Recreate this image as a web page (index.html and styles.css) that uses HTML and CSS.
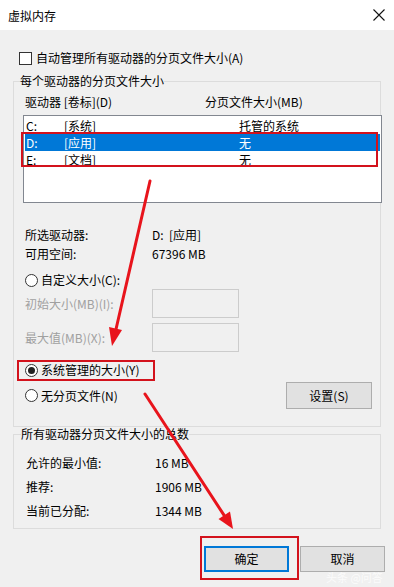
FILE: index.html
```html
<!DOCTYPE html>
<html lang="zh-CN">
<head>
<meta charset="utf-8">
<title>虚拟内存</title>
<link rel="stylesheet" href="styles.css">
</head>
<body>
<div class="window">
  <div class="titlebar">
    <span class="title">虚拟内存</span>
    <svg class="close" width="12" height="12" viewBox="0 0 12 12"><path d="M0.5 0.5 L11.5 11.5 M11.5 0.5 L0.5 11.5" stroke="#111" stroke-width="1.1" fill="none"/></svg>
  </div>
  <div class="content">
    <div class="check-row"><span class="checkbox"></span><span>自动管理所有驱动器的分页文件大小(A)</span></div>

    <fieldset class="group group-drives">
      <legend>每个驱动器的分页文件大小</legend>
      <div class="list-header"><span class="col-drive">驱动器 [卷标](D)</span><span>分页文件大小(MB)</span></div>
      <div class="listbox">
        <div class="lrow"><span class="c1">C:</span><span class="c2">[系统]</span><span>托管的系统</span></div>
        <div class="lrow selected"><span class="c1">D:</span><span class="c2">[应用]</span><span>无</span></div>
        <div class="lrow"><span class="c1">E:</span><span class="c2">[文档]</span><span>无</span></div>
      </div>
      <div class="info-row first"><span class="lbl">所选驱动器:</span><span>D:&nbsp;&nbsp;[应用]</span></div>
      <div class="info-row"><span class="lbl">可用空间:</span><span>67396 MB</span></div>
      <div class="radio-row custom"><span class="radio"></span><span>自定义大小(C):</span></div>
      <div class="input-row"><span class="lbl disabled">初始大小(MB)(I):</span><span class="textbox"></span></div>
      <div class="input-row second"><span class="lbl disabled">最大值(MB)(X):</span><span class="textbox"></span></div>
      <div class="radio-row system"><span class="radio checked"></span><span>系统管理的大小(Y)</span></div>
      <div class="radio-row nofile">
        <span class="radio-wrap"><span class="radio"></span><span>无分页文件(N)</span></span>
        <span class="btn set-btn">设置(S)</span>
      </div>
    </fieldset>

    <fieldset class="group group-total">
      <legend>所有驱动器分页文件大小的总数</legend>
      <div class="total-row"><span class="lbl2">允许的最小值:</span><span>16 MB</span></div>
      <div class="total-row"><span class="lbl2">推荐:</span><span>1906 MB</span></div>
      <div class="total-row"><span class="lbl2">当前已分配:</span><span>1344 MB</span></div>
    </fieldset>

    <div class="buttons">
      <span class="btn ok-btn">确定</span>
      <span class="btn">取消</span>
    </div>
  </div>

  <div class="mark mark-list"></div>
  <div class="mark mark-radio"></div>
  <div class="mark mark-ok"></div>

  <svg class="arrows" width="394" height="587" viewBox="0 0 394 587">
    <g stroke="#e8141c" stroke-width="3" stroke-linecap="round" fill="none">
      <line x1="150" y1="181" x2="115.6" y2="331"/>
      <line x1="145" y1="394" x2="224.3" y2="515.6"/>
    </g>
    <g fill="#e8141c">
      <polygon points="112,346 122,330 109,327"/>
      <polygon points="233,529 230,511.5 218.5,519"/>
    </g>
  </svg>

  <div class="watermark">头条 @问答</div>
</div>
</body>
</html>
```

FILE: styles.css
```css
* { box-sizing: border-box; }

html, body {
  margin: 0;
  padding: 0;
}

body {
  width: 394px;
  height: 587px;
  overflow: hidden;
  background: #f0f0f0;
  font-family: "Noto Sans CJK SC", "Noto Sans", sans-serif;
  font-size: 12px;
  color: #000;
}

.window {
  position: relative;
  width: 394px;
  height: 587px;
}

.titlebar {
  height: 30px;
  background: #fff;
  display: flex;
  align-items: center;
  justify-content: space-between;
  padding: 0 9px 0 8px;
}

.title {
  font-size: 12px;
  line-height: 16px;
  margin-top: 1px;
}

.close {
  display: block;
}

.content {
  padding: 0 13px;
}

.check-row {
  display: flex;
  align-items: center;
  height: 16px;
  line-height: 16px;
  margin-top: 20px;
  padding-left: 6px;
}

.checkbox {
  width: 13px;
  height: 13px;
  border: 1px solid #333;
  background: #fff;
  margin-right: 4px;
  flex: none;
}

.group {
  margin: 0;
  min-width: 0;
  border: 1px solid #dcdcdc;
}

.group legend {
  padding: 0;
  margin-left: -3px;
  line-height: 16px;
  height: 16px;
}

.group-drives {
  margin-top: 7px;
  padding: 0 8px 17px 9px;
}

.list-header {
  display: flex;
  height: 16px;
  line-height: 16px;
  margin-top: 5px;
  padding-left: 2px;
}

.col-drive { width: 180px; }

.listbox {
  margin-top: 5px;
  margin-right: -10px;
  height: 88px;
  border: 1px solid #828790;
  background: #fff;
  padding: 1px 1px 0;
}

.lrow {
  display: flex;
  height: 17px;
  line-height: 17px;
  padding-left: 1px;
}

.lrow.selected {
  background: #0078d7;
  color: #fff;
}

.c1 { width: 38px; }
.c2 { width: 175px; }

.info-row {
  display: flex;
  height: 19px;
  line-height: 19px;
  padding-left: 2px;
}

.info-row.first { margin-top: 22px; }

.lbl { width: 127px; flex: none; }

.disabled { color: #a0a0a0; }

.radio-row {
  display: flex;
  align-items: center;
  height: 18px;
  line-height: 18px;
  padding-left: 2px;
}

.radio-row.custom { margin-top: 8px; }
.radio-row.system { margin-top: 9px; }

.radio-row.nofile {
  margin-top: 3px;
  height: 27px;
  justify-content: space-between;
}

.radio-wrap {
  display: flex;
  align-items: center;
}

.radio {
  width: 13px;
  height: 13px;
  border: 1px solid #333;
  border-radius: 50%;
  background: #fff;
  margin-right: 3px;
  flex: none;
  display: flex;
  align-items: center;
  justify-content: center;
}

.radio.checked::after {
  content: "";
  width: 7px;
  height: 7px;
  border-radius: 50%;
  background: #222;
}

.input-row {
  display: flex;
  align-items: center;
  height: 29px;
  padding-left: 2px;
}

.input-row.second { margin-top: 5px; }

.textbox {
  width: 87px;
  height: 29px;
  border: 1px solid #cccccc;
  background: #f0f0f0;
}

.btn {
  display: flex;
  align-items: center;
  justify-content: center;
  width: 85px;
  height: 26px;
  border: 1px solid #adadad;
  background: #e1e1e1;
  line-height: 16px;
}

.set-btn {
  width: 86px;
  height: 27px;
}

.group-total {
  margin-top: -1px;
  padding: 9px 8px 5px 10px;
}

.total-row {
  display: flex;
  height: 24px;
  line-height: 24px;
  padding-left: 2px;
}

.lbl2 { width: 129px; flex: none; }

.buttons {
  display: flex;
  justify-content: flex-end;
  gap: 11px;
  margin-top: 17px;
  margin-right: -4px;
}

.ok-btn {
  border: 2px solid #0078d7;
}

.mark {
  position: absolute;
  border: 2px solid #d3121c;
}

.mark-list { left: 21px; top: 132px; width: 357px; height: 35px; }
.mark-radio { left: 17px; top: 360px; width: 138px; height: 21px; }
.mark-ok { left: 200px; top: 536px; width: 99px; height: 44px; }

.arrows {
  position: absolute;
  left: 0;
  top: 0;
  pointer-events: none;
}

.watermark {
  position: absolute;
  left: 326px;
  top: 570px;
  font-size: 11px;
  line-height: 14px;
  color: rgba(255, 255, 255, 0.75);
  white-space: nowrap;
}
```
